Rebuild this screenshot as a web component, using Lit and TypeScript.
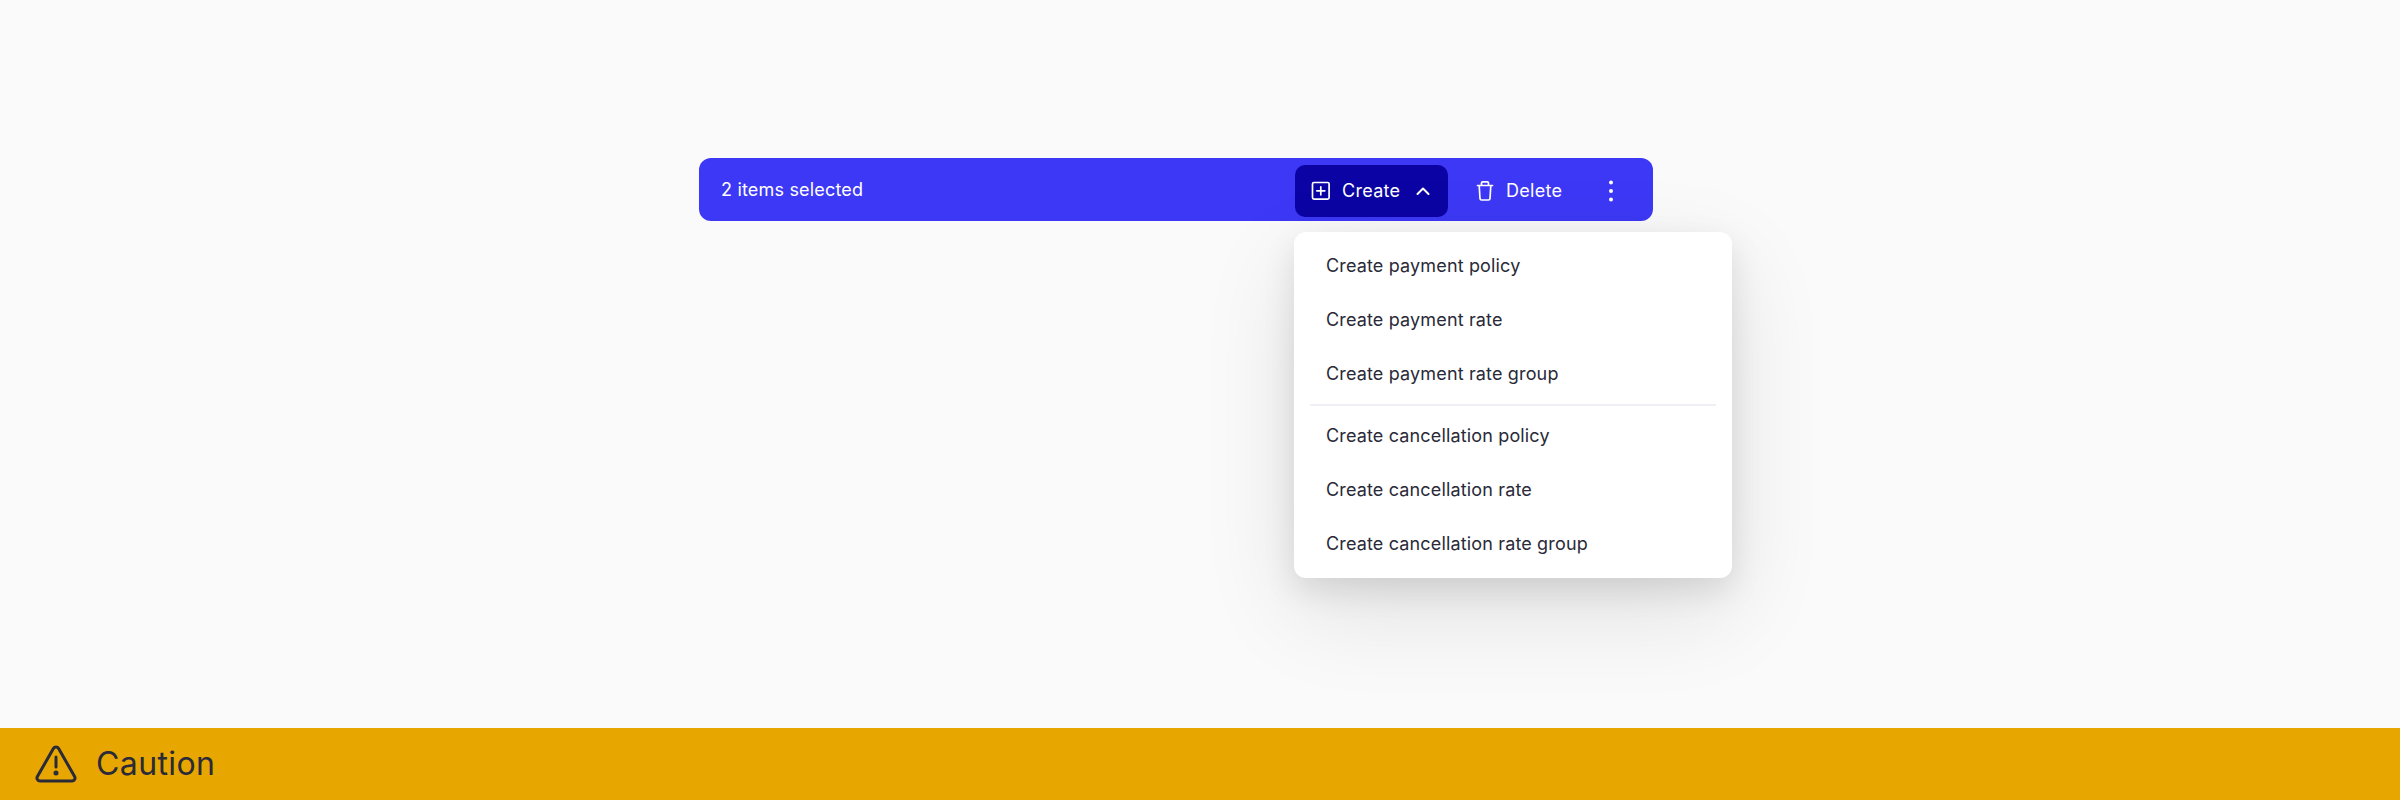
import { LitElement, html, css, svg } from "lit";
import { customElement } from "lit/decorators.js";

const createItems = [
  ["Create payment policy", "Create payment rate", "Create payment rate group"],
  ["Create cancellation policy", "Create cancellation rate", "Create cancellation rate group"],
];

const plusIcon = svg`<rect x="3.5" y="3.5" width="16.6" height="16.6" rx="1.5"></rect><path d="M11.8 7.8v8M7.8 11.8h8"></path>`;
const chevronIcon = svg`<path d="M6.5 15 12 9.5l5.5 5.5" stroke-width="2"></path>`;
const trashIcon = svg`<path d="M4.5 6.5h15M8.5 6.5V4a1.2 1.2 0 0 1 1.2-1.2h4.6A1.2 1.2 0 0 1 15.5 4v2.5M6.2 6.5l.8 13.2A1.5 1.5 0 0 0 8.5 21h7a1.5 1.5 0 0 0 1.5-1.3l.8-13.2"></path>`;

@customElement("app-root")
export class AppRoot extends LitElement {
  static styles = css`
    :host {
      display: flex;
      flex-direction: column;
      height: 800px;
      background: #fafafa;
      font-family: Inter, "Liberation Sans", sans-serif;
      color: #2a2a38;
    }

    .stage {
      flex: 1;
      padding: 158px 0 0 699px;
    }

    .bar-wrap {
      position: relative;
      width: 954px;
    }

    .bar {
      display: flex;
      align-items: center;
      height: 63px;
      box-sizing: border-box;
      padding: 0 30px 0 22px;
      background: #3d38f5;
      border-radius: 12px;
      color: #fff;
      font-size: 18px;
      line-height: 24px;
      letter-spacing: 0.18px;
    }

    .count {
      flex: 1;
    }

    .actions {
      display: flex;
      align-items: center;
      margin-top: 3px;
      letter-spacing: 0.3px;
    }

    .btn {
      display: flex;
      align-items: center;
      height: 52px;
      box-sizing: border-box;
      border-radius: 10px;
    }

    .btn svg {
      width: 24px;
      height: 24px;
      fill: none;
      stroke: currentColor;
      stroke-width: 1.7;
      stroke-linecap: round;
      stroke-linejoin: round;
      flex: none;
    }

    .create {
      width: 153px;
      padding: 0 13px 0 14px;
      gap: 9px;
      background: #0c03a4;
    }

    .create span {
      flex: 1;
    }

    .delete {
      width: 122px;
      padding: 0 16px;
      margin-left: 9px;
      gap: 9px;
    }

    .more {
      width: 24px;
      justify-content: center;
      margin-left: 20px;
    }

    .more svg {
      fill: currentColor;
      stroke: none;
    }

    .menu {
      position: absolute;
      top: 74px;
      left: 595px;
      width: 438px;
      box-sizing: border-box;
      padding: 6px 16px 8px;
      background: #fff;
      border-radius: 12px;
      box-shadow: 0 32px 96px rgba(0, 0, 0, 0.11), 0 12px 32px rgba(0, 0, 0, 0.1);
      font-size: 18px;
      line-height: 24px;
      letter-spacing: 0.15px;
    }

    .item {
      padding: 16px 16px 14px;
    }

    .divider {
      height: 2px;
      margin: 4px 0 2px;
      background: #efeff5;
    }

    .caution {
      display: flex;
      align-items: center;
      position: relative;
      height: 72px;
      padding: 0 32px;
      gap: 16px;
      background: #e8a600;
      font-size: 32px;
      line-height: 40px;
      letter-spacing: 0.4px;
    }

    .caution svg {
      width: 48px;
      height: 48px;
      fill: none;
      stroke: currentColor;
      stroke-width: 3;
      stroke-linecap: round;
      stroke-linejoin: round;
      flex: none;
    }
  `;

  render() {
    return html`
      <div class="stage">
        <div class="bar-wrap">
          <div class="bar">
            <span class="count">2 items selected</span>
            <div class="actions">
              <div class="btn create">
                <svg viewBox="0 0 24 24">${plusIcon}</svg>
                <span>Create</span>
                <svg viewBox="0 0 24 24">${chevronIcon}</svg>
              </div>
              <div class="btn delete">
                <svg viewBox="0 0 24 24">${trashIcon}</svg>
                <span>Delete</span>
              </div>
              <div class="btn more">
                <svg viewBox="0 0 24 24">
                  <circle cx="12" cy="3.5" r="2"></circle>
                  <circle cx="12" cy="12" r="2"></circle>
                  <circle cx="12" cy="20.5" r="2"></circle>
                </svg>
              </div>
            </div>
          </div>
          <div class="menu">
            ${createItems.map(
              (group, i) => html`
                ${i > 0 ? html`<div class="divider"></div>` : ""}
                ${group.map((label) => html`<div class="item">${label}</div>`)}
              `
            )}
          </div>
        </div>
      </div>
      <div class="caution">
        <svg viewBox="0 0 48 48">
          <path d="M21.4 8.5 5.4 36.5A3 3 0 0 0 8 41h32a3 3 0 0 0 2.6-4.5L26.6 8.5a3 3 0 0 0-5.2 0Z"></path>
          <path d="M24 17v10"></path>
          <circle cx="24" cy="33" r="1" fill="currentColor"></circle>
        </svg>
        <span>Caution</span>
      </div>
    `;
  }
}
